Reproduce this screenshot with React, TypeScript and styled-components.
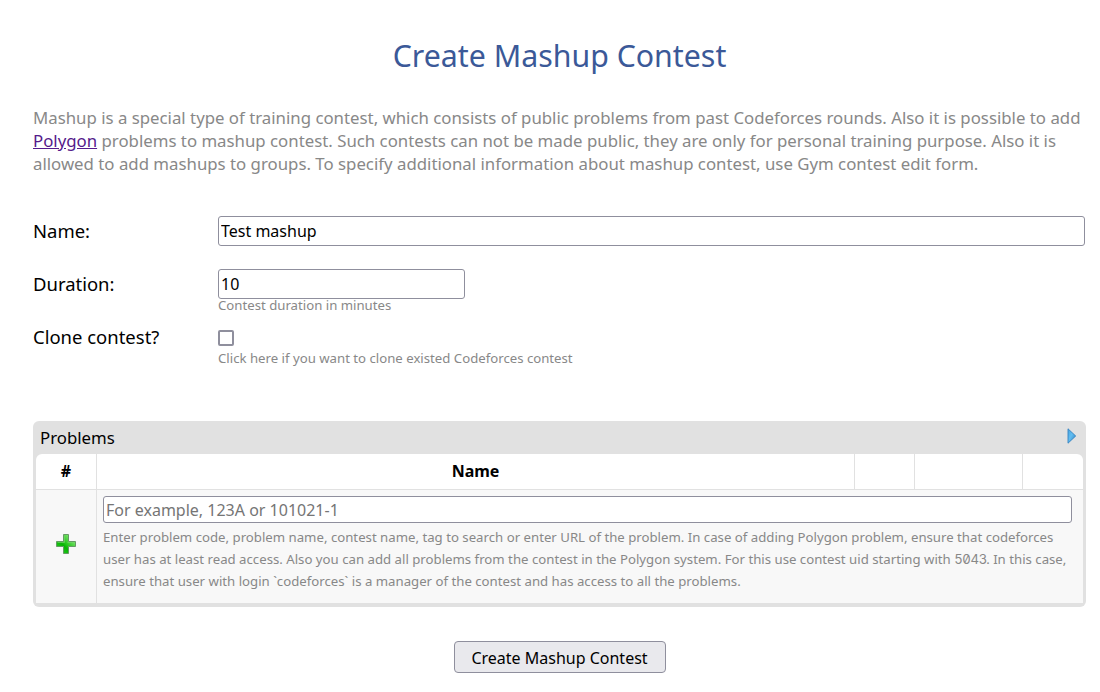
import React from "react";
import styled, { createGlobalStyle } from "styled-components";

const GlobalStyle = createGlobalStyle`
  * { box-sizing: border-box; }
  body {
    margin: 0;
    background: #fff;
    color: #000;
    font-family: "Noto Sans", sans-serif;
    font-size: 13px;
  }
`;

const Page = styled.main`
  width: 1100px;
  height: 692px;
  padding: 34px 14px 0 33px;
  overflow: hidden;
`;

const Title = styled.h1`
  margin: 0;
  height: 44px;
  line-height: 44px;
  text-align: center;
  font-size: 30.3px;
  font-weight: 400;
  color: #3b5998;
`;

const Intro = styled.p`
  margin: 28px 0 0;
  font-size: 16.81px;
  line-height: 23px;
  color: #888;
  white-space: nowrap;
`;

const Link = styled.a`
  color: #551a8b;
  text-decoration: underline;
`;

const Form = styled.form`
  margin-top: 41px;
`;

const Field = styled.div`
  display: grid;
  grid-template-columns: 185px 867px;
  height: 53px;
`;

const Label = styled.label`
  font-size: 18.48px;
  line-height: 30px;
`;

const Control = styled.div`
  display: flex;
  flex-direction: column;
  align-items: flex-start;
`;

const Input = styled.input<{ $width: string; $height: number }>`
  display: block;
  width: ${(p) => p.$width};
  height: ${(p) => p.$height}px;
  padding: 0 2px;
  border: 1px solid #8f8f9d;
  border-radius: 3px;
  background: #fff;
  color: #000;
  font: 16px "Noto Sans", sans-serif;
  outline: none;
  &::placeholder { color: #757575; }
`;

const Checkbox = styled.input`
  appearance: none;
  width: 16px;
  height: 16px;
  margin: 8px 0 6px;
  border: 2px solid #8f8f9d;
  border-radius: 2px;
  background: #fff;
`;

const Hint = styled.div`
  font-size: 13.2px;
  line-height: 13px;
  color: #888;
  white-space: nowrap;
`;

const Panel = styled.section`
  width: 1053px;
  height: 186px;
  margin-top: 46px;
  padding: 0 3px 3px;
  border-radius: 6px;
  background: #e1e1e1;
`;

const PanelHeader = styled.header`
  display: flex;
  align-items: center;
  justify-content: space-between;
  height: 33px;
  padding: 0 6px 0 4px;
  font-size: 16.8px;
`;

const Arrow = styled.svg`
  margin-top: -4px;
`;

const Table = styled.div`
  display: grid;
  grid-template-columns: 60px 1fr 59px 107px 60px;
  grid-template-rows: 35px 113px;
  gap: 1px;
  border-radius: 6px 6px 0 0;
  overflow: hidden;
`;

const HeadCell = styled.div`
  background: #fff;
  text-align: center;
  font-size: 16px;
  font-weight: 700;
  line-height: 34px;
`;

const AddCell = styled.div`
  display: flex;
  align-items: center;
  justify-content: center;
  padding-bottom: 6px;
  background: #f8f8f8;
`;

const SearchCell = styled.div`
  grid-column: 2 / -1;
  padding: 6px 11px 0 6px;
  background: #f8f8f8;
`;

const Description = styled.p`
  margin: 3px 0 0;
  font-size: 13.21px;
  line-height: 22px;
  color: #888;
  white-space: nowrap;
`;

const Code = styled.span`
  display: inline-block;
  width: 32px;
  font-family: Inter, sans-serif;
  font-size: 13.2px;
  font-feature-settings: "zero" 1, "tnum" 1;
  letter-spacing: -0.4px;
  line-height: 1;
`;

const Actions = styled.div`
  display: flex;
  justify-content: center;
  margin-top: 34px;
`;

const Button = styled.button`
  width: 212px;
  height: 32px;
  padding: 1px 0 0;
  border: 1px solid #8f8f9d;
  border-radius: 4px;
  background: #e9e9ed;
  color: #000;
  font: 16px "Noto Sans", sans-serif;
`;

const ArrowIcon = () => (
  <Arrow width="10" height="16" viewBox="0 0 10 16">
    <defs>
      <linearGradient id="arrow" x1="0" y1="0" x2="1" y2="1">
        <stop offset="0" stopColor="#48a5e0" />
        <stop offset="0.45" stopColor="#62bdf0" />
        <stop offset="1" stopColor="#2779bb" />
      </linearGradient>
    </defs>
    <path d="M1 .8 8.7 8 1 15.2Z" fill="url(#arrow)" stroke="#3583c2" strokeWidth=".9" strokeLinejoin="round" />
  </Arrow>
);

const PlusIcon = () => (
  <svg width="20" height="20" viewBox="0 0 20 20">
    <defs>
      <linearGradient id="plus" x1="1" y1="0" x2="0" y2="1">
        <stop offset="0.2" stopColor="#7be36c" />
        <stop offset="0.5" stopColor="#24c51c" />
        <stop offset="0.6" stopColor="#08b505" />
        <stop offset="1" stopColor="#35d62c" />
      </linearGradient>
    </defs>
    <path d="M7.5.5h5v7h7v5h-7v7h-5v-7h-7v-5h7Z" fill="url(#plus)" stroke="#659b64" />
    <path d="M8.5 1.5v7h-7M11.5 8.5h7" fill="none" stroke="#72d568" strokeOpacity=".7" />
  </svg>
);

export default function App() {
  return (
    <Page>
      <GlobalStyle />
      <Title>Create Mashup Contest</Title>
      <Intro>
        Mashup is a special type of training contest, which consists of public problems from past Codeforces rounds. Also it is possible to add
        <br />
        <Link href="#">Polygon</Link> problems to mashup contest. Such contests can not be made public, they are only for personal training purpose. Also it is
        <br />
        allowed to add mashups to groups. To specify additional information about mashup contest, use Gym contest edit form.
      </Intro>
      <Form>
        <Field>
          <Label htmlFor="name">Name:</Label>
          <Control>
            <Input id="name" $width="867px" $height={30} defaultValue="Test mashup" />
          </Control>
        </Field>
        <Field>
          <Label htmlFor="duration">Duration:</Label>
          <Control>
            <Input id="duration" $width="247px" $height={30} defaultValue="10" />
            <Hint>Contest duration in minutes</Hint>
          </Control>
        </Field>
        <Field>
          <Label htmlFor="clone">Clone contest?</Label>
          <Control>
            <Checkbox id="clone" type="checkbox" />
            <Hint>Click here if you want to clone existed Codeforces contest</Hint>
          </Control>
        </Field>
        <Panel>
          <PanelHeader>
            Problems
            <ArrowIcon />
          </PanelHeader>
          <Table>
            <HeadCell>#</HeadCell>
            <HeadCell>Name</HeadCell>
            <HeadCell />
            <HeadCell />
            <HeadCell />
            <AddCell>
              <PlusIcon />
            </AddCell>
            <SearchCell>
              <Input $width="100%" $height={27} placeholder="For example, 123A or 101021-1" />
              <Description>
                Enter problem code, problem name, contest name, tag to search or enter URL of the problem. In case of adding Polygon problem, ensure that codeforces
                <br />
                user has at least read access. Also you can add all problems from the contest in the Polygon system. For this use contest uid starting with <Code>5043</Code>. In this case,
                <br />
                ensure that user with login `codeforces` is a manager of the contest and has access to all the problems.
              </Description>
            </SearchCell>
          </Table>
        </Panel>
        <Actions>
          <Button type="button">Create Mashup Contest</Button>
        </Actions>
      </Form>
    </Page>
  );
}
